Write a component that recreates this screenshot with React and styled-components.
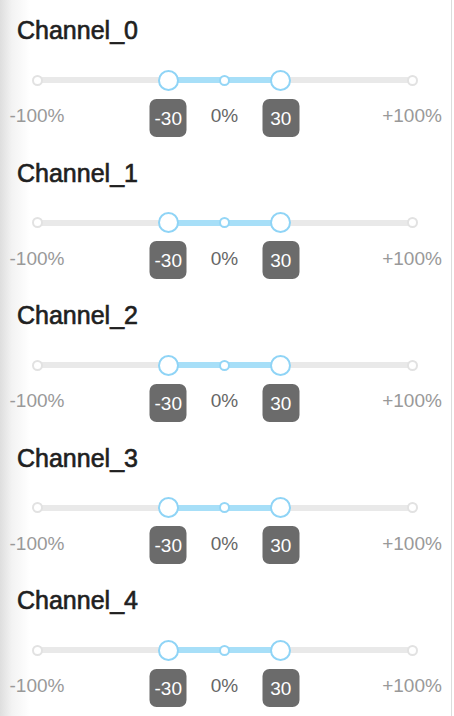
import React from "react";
import styled, { createGlobalStyle } from "styled-components";

const GlobalStyle = createGlobalStyle`
  html, body {
    margin: 0;
    padding: 0;
    background: #fff;
  }
  body {
    font-family: "Liberation Sans", Arial, sans-serif;
  }
`;

const Panel = styled.div`
  width: 451px;
  height: 716px;
  overflow: hidden;
  border-right: 1px solid #dcdcdc;
  background: linear-gradient(to right, #dedede 0px, #f3f3f3 12px, #ffffff 30px);
`;

const Section = styled.section`
  display: flex;
  flex-direction: column;
  height: 142.5px;
  padding-top: 16px;
  box-sizing: border-box;
`;

const Title = styled.h2`
  margin: 0 0 0 17px;
  font-size: 25px;
  line-height: 28px;
  font-weight: 400;
  -webkit-text-stroke: 0.65px #1f1f1f;
  color: #1f1f1f;
`;

const Body = styled.div`
  display: flex;
  flex-direction: column;
  gap: 7px;
  width: 375px;
  margin: 26px 0 0 37px;
`;

/* slider: rail with end / centre dots, active track, two handles */
const SliderBox = styled.div`
  position: relative;
  height: 20px;
`;

const Rail = styled.div`
  display: flex;
  align-items: center;
  justify-content: space-between;
  height: 20px;
  margin: 0 -5.5px;
  background: linear-gradient(#e9e9e9, #e9e9e9) center / calc(100% - 11px) 6px no-repeat;
`;

const Dot = styled.span`
  position: relative;
  width: 7px;
  height: 7px;
  border-radius: 50%;
  background: #fff;
  border: 2px solid ${(p) => (p.$active ? "#94d6f6" : "#e2e2e2")};
  z-index: 1;
`;

const Track = styled.div`
  position: absolute;
  top: 7px;
  height: 6px;
  background: #a7dff8;
`;

const Handle = styled.span`
  position: absolute;
  top: -0.5px;
  width: 17px;
  height: 17px;
  margin-left: -10.5px;
  border-radius: 50%;
  background: #fff;
  border: 2px solid #8fd4f6;
  z-index: 2;
`;

const Badge = styled.span`
  position: absolute;
  top: 27px;
  left: 50%;
  transform: translateX(-50%);
  width: 37px;
  height: 38px;
  border-radius: 7px;
  background: #6b6b6b;
  color: #fff;
  font-size: 19px;
  line-height: 40px;
  text-align: center;
`;

/* -100% / 0% / +100% marks, each centred on its dot */
const Marks = styled.div`
  display: flex;
  justify-content: space-between;
  height: 38px;
`;

const Mark = styled.span`
  display: flex;
  justify-content: center;
  width: 0;
  font-size: 19px;
  line-height: 38px;
  color: ${(p) => (p.$strong ? "#666" : "#999")};
  white-space: nowrap;
`;

const MIN = -100;
const MAX = 100;
const pct = (v) => ((v - MIN) / (MAX - MIN)) * 100;

const channels = [0, 1, 2, 3, 4].map((i) => ({
  name: `Channel_${i}`,
  low: -30,
  high: 30,
}));

function RangeSlider({ low, high }) {
  const lo = pct(low);
  const hi = pct(high);
  return (
    <SliderBox>
      <Rail>
        {[MIN, 0, MAX].map((m) => (
          <Dot key={m} $active={m >= low && m <= high} />
        ))}
      </Rail>
      <Track style={{ left: `${lo}%`, width: `${hi - lo}%` }} />
      <Handle style={{ left: `${lo}%` }}>
        <Badge>{low}</Badge>
      </Handle>
      <Handle style={{ left: `${hi}%` }}>
        <Badge>{high}</Badge>
      </Handle>
    </SliderBox>
  );
}

export default function App() {
  return (
    <>
      <GlobalStyle />
      <Panel>
        {channels.map((c) => (
          <Section key={c.name}>
            <Title>{c.name}</Title>
            <Body>
              <RangeSlider low={c.low} high={c.high} />
              <Marks>
                <Mark>-100%</Mark>
                <Mark $strong>0%</Mark>
                <Mark>+100%</Mark>
              </Marks>
            </Body>
          </Section>
        ))}
      </Panel>
    </>
  );
}
